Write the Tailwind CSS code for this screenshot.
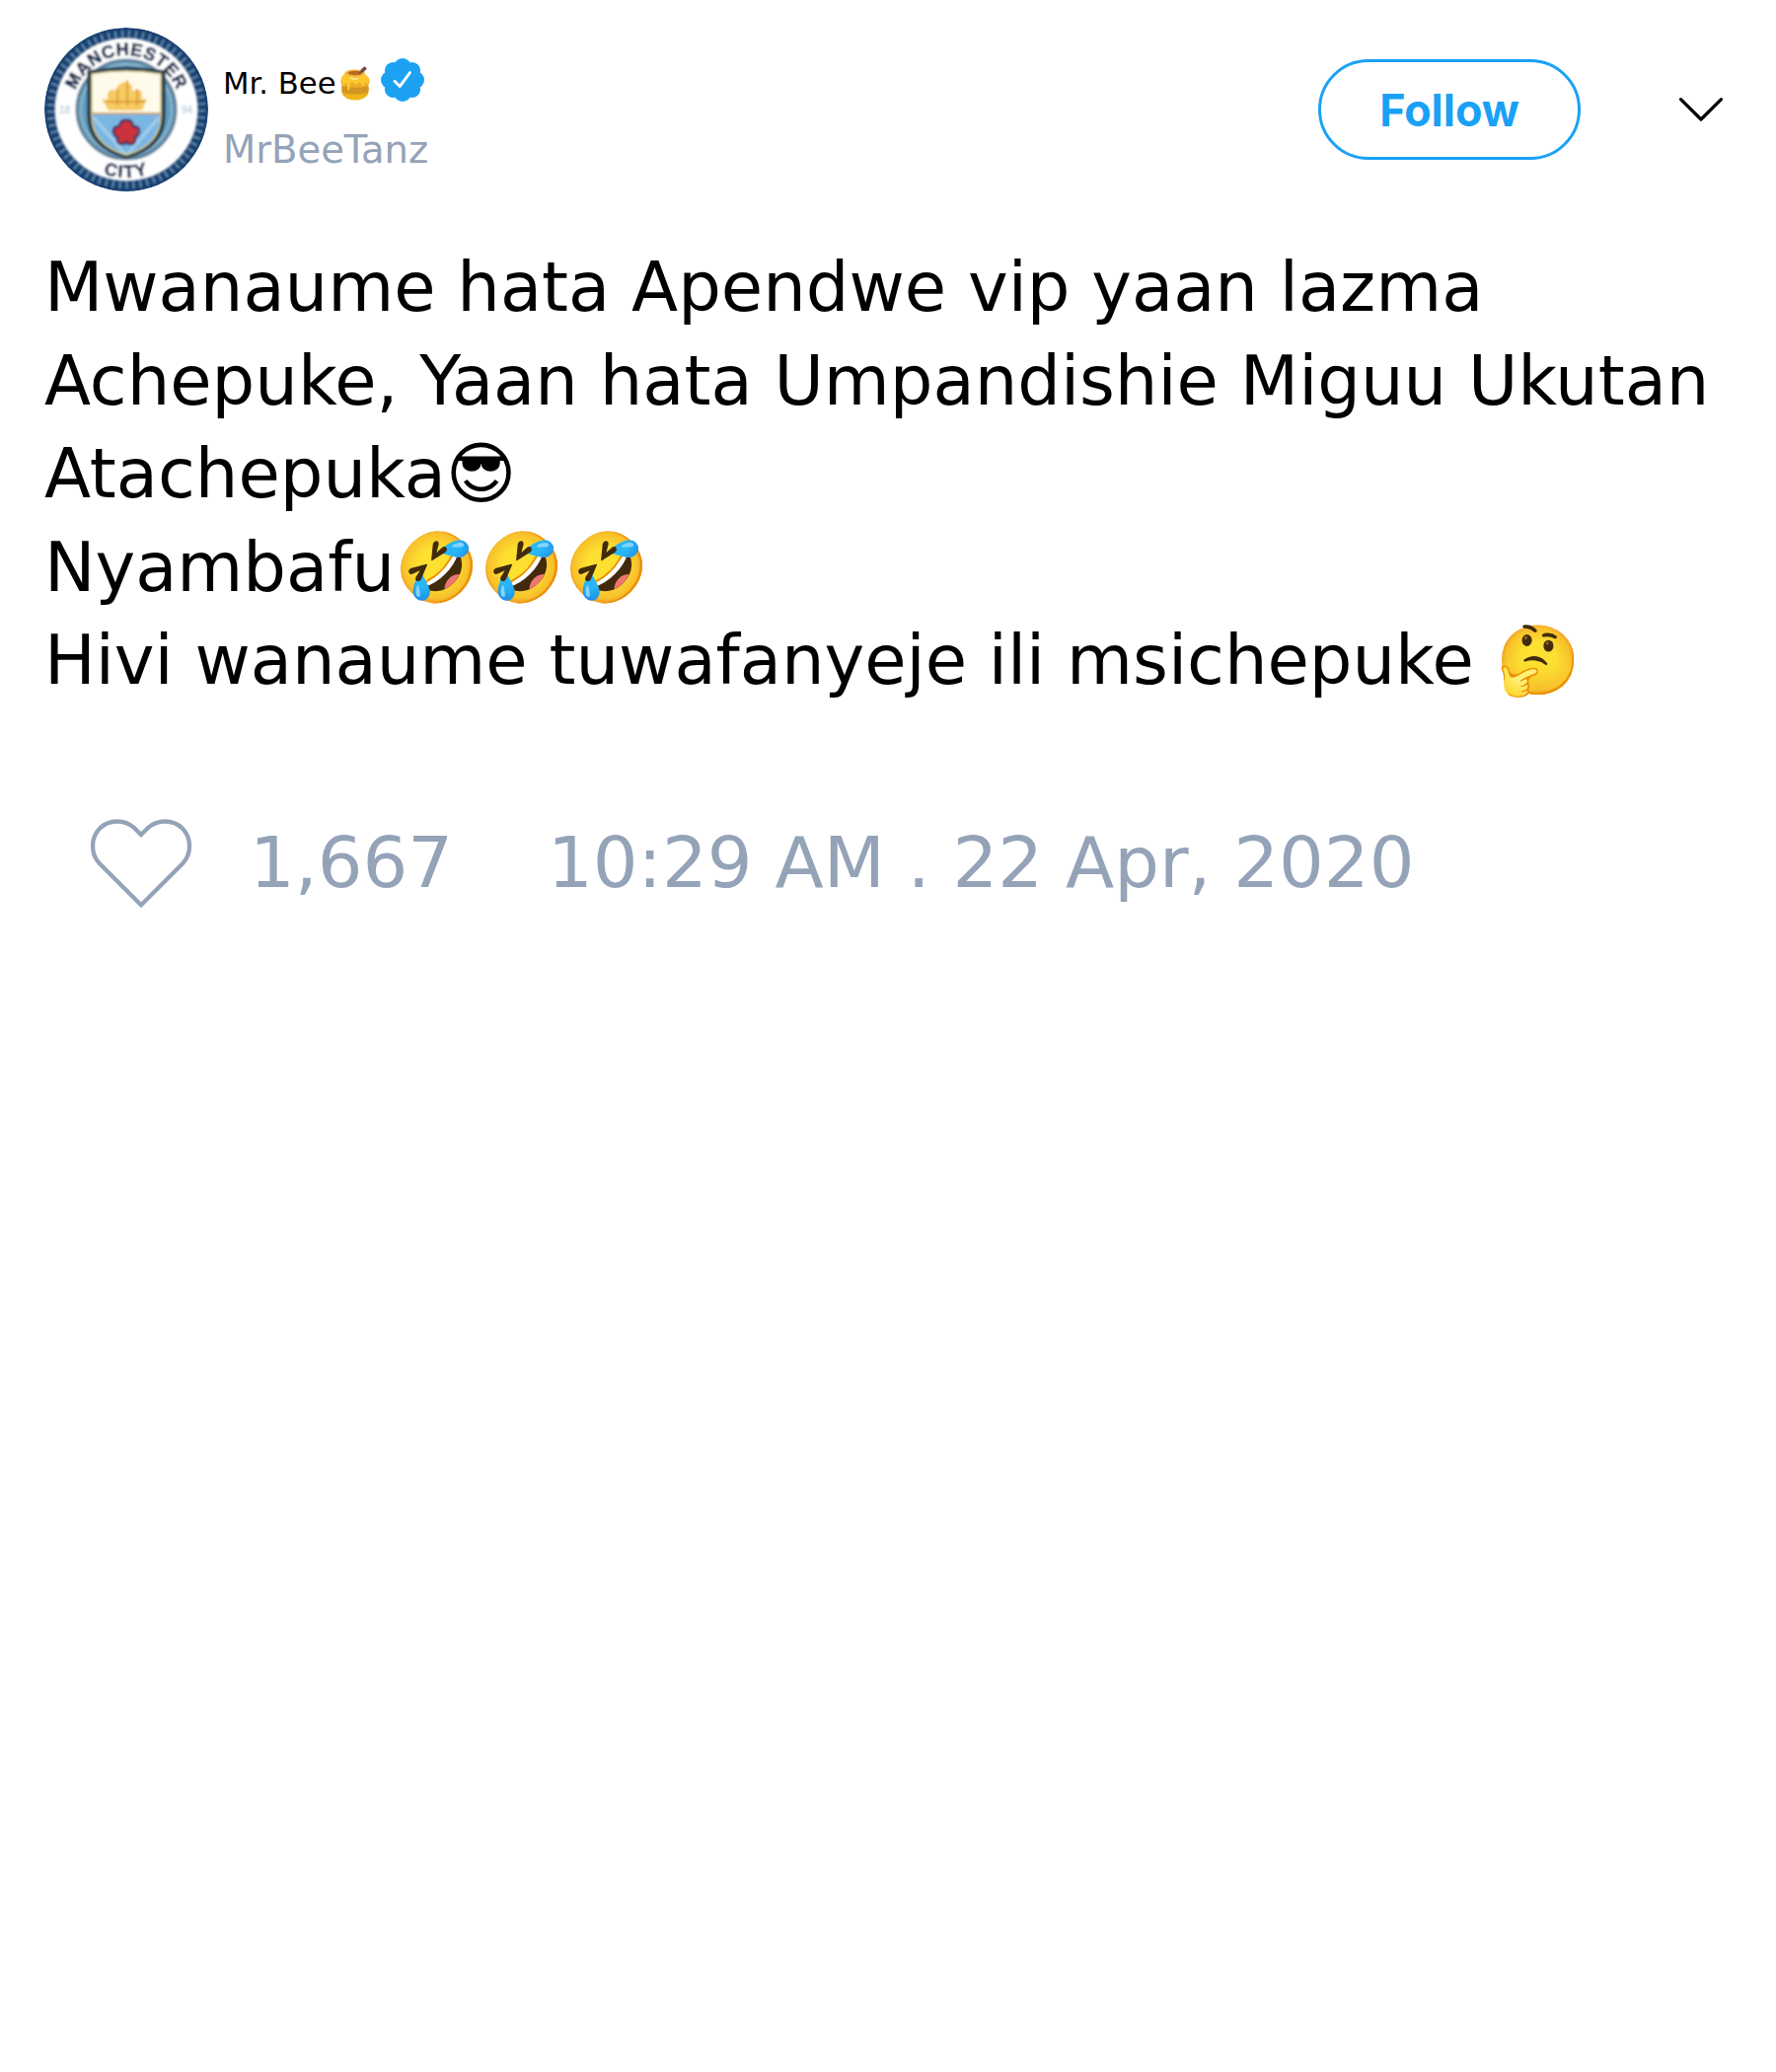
<!DOCTYPE html>
<html lang="sw">
<head>
<meta charset="utf-8">
<title>Mr. Bee</title>
<script src="https://cdn.jsdelivr.net/npm/@tailwindcss/browser@4"></script>
</head>
<body class="bg-white text-black font-['DejaVu_Sans',sans-serif]">
<main class="w-[1800px] h-[2100px] overflow-hidden pl-[45px] pt-[28px]">
  <header class="flex items-start h-[166px]">
    <svg class="size-[166px] shrink-0 rounded-full" viewBox="0 0 166 166">
      <defs>
        <filter id="soft"><feGaussianBlur stdDeviation="1.100"/></filter>
        <path id="arcTop" d="M28 83a55 55 0 0 1 110 0"/>
        <path id="arcBottom" d="M14 83a69 69 0 0 0 138 0"/>
        <clipPath id="shield"><path d="M48 47q35-6 70 0v42q0 30-35 40q-35-10-35-40z"/></clipPath>
      </defs>
      <circle cx="83" cy="83" r="83" fill="#173f70"/>
      <g filter="url(#soft)">
        <circle cx="83" cy="83" r="77" fill="none" stroke="#6489a5" stroke-width="7" stroke-dasharray="2.500 4.500"/>
        <circle cx="83" cy="83" r="72.500" fill="#fff"/>
        <circle cx="83" cy="83" r="50" fill="#5f9cc0" stroke="#5f8098" stroke-width="3"/>
        <circle cx="83" cy="83" r="46" fill="none" stroke="#8fb4c8" stroke-width="2"/>
        <path d="M44 44q39-7 78 0v45q0 33-39 43q-39-10-39-43z" fill="#283b4b" stroke="#283b4b" stroke-width="1.500"/>
        <g clip-path="url(#shield)">
          <path fill="#fffbea" d="M44 40h78v47H44z"/>
          <path fill="#79b6e4" d="M44 87h78v46H44z"/>
          <path stroke="#a5cdea" stroke-width="3" d="M50 91l34 40M116 91l-34 40"/>
          <path stroke="#cda25a" stroke-width="2" d="M44 87h78"/>
        </g>
        <path d="M48 47q35-6 70 0v42q0 30-35 40q-35-10-35-40z" fill="none" stroke="#d8c98d" stroke-width="1.500"/>
        <path d="M58 72l6 1v-7q5-6 10-1v-6q8-8 15 0v6q6-5 10 1v7l5-1-5 12H65z" fill="#f6cb62"/>
        <path d="M62 75h40M74 61v18M84 53v26M94 62v17" stroke="#dc9a34" stroke-width="1.800"/>
        <path d="M83 94q6-1 7 6q7 0 6 6q-1 4-4 5q1 7-5 7q-3 0-4-2q-1 2-4 2q-6 0-5-7q-3-1-4-5q-1-6 6-6q1-7 7-6z" fill="#cc303c" stroke="#4b315c" stroke-width="2.500"/>
        <g fill="#16294e" stroke="#16294e" stroke-width="0.600" font-family="Liberation Sans, sans-serif" font-weight="700" font-size="18">
          <text><textPath href="#arcTop" startOffset="50%" text-anchor="middle" letter-spacing="0.600">MANCHESTER</textPath></text>
          <text><textPath href="#arcBottom" startOffset="50%" text-anchor="middle" letter-spacing="1.500">CITY</textPath></text>
        </g>
        <g fill="#a3b9cc" font-family="Liberation Sans, sans-serif" font-size="10">
          <text x="15" y="87">18</text><text x="139" y="87">94</text>
        </g>
      </g>
    </svg>
    <div class="ml-[15px] flex flex-col">
      <div class="flex items-start pt-[31px] h-[89px]">
        <span class="pt-px text-[30.7px] leading-[50px] whitespace-nowrap">Mr. Bee</span>
        <svg role="img" aria-label="🍯" class="w-[32px] h-[36px] ml-[3px] mt-[8px]" viewBox="0 0 32 36">
          <defs><linearGradient id="pot" x2="0" y2="1"><stop stop-color="#f7bd31"/><stop offset=".6" stop-color="#e9a522"/><stop offset="1" stop-color="#f2bd14"/></linearGradient></defs>
          <path d="M6 8Q1 11 1.500 16Q3 20 2.500 23Q1 29 8 33Q16 36 24 33Q31 29 29.500 23Q28.500 20 30.500 16Q31 11 25 8z" fill="url(#pot)"/>
          <path d="M2.500 20Q16 24 29.500 20Q30 26 28 27Q16 30 4 27Q2 26 2.500 20z" fill="#d39624"/>
          <ellipse cx="15.500" cy="7.500" rx="10.500" ry="4" fill="#f0b746"/>
          <ellipse cx="16" cy="7" rx="7.500" ry="2.200" fill="#b96a1c"/>
          <path d="M2 14Q2 9 6 8Q7 11 12 10Q17 14 25 8Q31 11 30 16Q28 20 27 16Q25 16 25 20Q23 22 22 17Q19 16 18 18Q16 20 15 17Q13 15 11 17L10 24Q8 26 8 22Q8 16 6 17Q5 22 3.500 19z" fill="#fdc82d"/>
          <path d="M11 11.500q4 3 8 .5" stroke="#ffdf80" stroke-width="2" fill="none"/>
          <path d="M20 7l4-3" stroke="#84503b" stroke-width="1.800"/><path d="M23.500 4.500l2-2" stroke="#75483d" stroke-width="3.800" stroke-linecap="round"/>
        </svg>
        <svg class="size-[44px] ml-[10px]" viewBox="386 59 44 44">
          <g fill="#1da1f2">
            <circle cx="408" cy="81" r="17"/>
            <circle cx="408" cy="68" r="9"/><circle cx="408" cy="94" r="9"/><circle cx="395" cy="81" r="9"/><circle cx="421" cy="81" r="9"/>
            <circle cx="398.500" cy="71.500" r="8.600"/><circle cx="417.500" cy="71.500" r="8.600"/><circle cx="398.500" cy="90.500" r="8.600"/><circle cx="417.500" cy="90.500" r="8.600"/>
          </g>
          <path d="M400 82.300l5.200 5.300 10.300-14" fill="none" stroke="#fff" stroke-width="2.800" stroke-linecap="round" stroke-linejoin="round"/>
        </svg>
      </div>
      <span class="text-[38.5px] leading-[70px] text-[#94a3b8] whitespace-nowrap">MrBeeTanz</span>
    </div>
    <button class="ml-auto mt-[32px] pt-[2px] w-[266px] h-[102px] shrink-0 rounded-[51px] border-[3px] border-[#1aa1f5] text-[#1aa1f5] text-[44.8px] leading-[60px] font-bold font-['Inter',sans-serif]">Follow</button>
    <svg class="w-[50px] h-[30px] ml-[97px] mr-[51px] mt-[68px] shrink-0" viewBox="1699 96 50 30"><path d="M1703.500 100.700L1724 121l20.500-20.300" fill="none" stroke="#000" stroke-width="3.200" stroke-linecap="round" stroke-linejoin="round"/></svg>
  </header>

  <p class="mt-[50px] text-[68.8px] leading-[94.5px] whitespace-nowrap">Mwanaume hata Apendwe vip yaan lazma<br>Achepuke, Yaan hata Umpandishie Miguu Ukutan<br>Atachepuka😎<br>Nyambafu🤣🤣🤣<br>Hivi wanaume tuwafanyeje ili msichepuke 🤔</p>

  <footer class="mt-[109px] flex items-start text-[72px] leading-[96px] text-[#94a3b8] whitespace-nowrap">
    <svg class="w-[106px] h-[98px] ml-[45px]" viewBox="90 826 106 98"><path d="M143 917.300L100.700 875C96 870 94 863 94 857.500C94 843 105 832.500 118.700 832.500C126 832.500 132 835.500 136 839L143 846L150 839C154 835.500 160 832.500 167.300 832.500C181 832.500 192 843 192 857.500C192 863 190 870 185.300 875Z" fill="none" stroke="currentColor" stroke-width="4.300"/></svg>
    <span class="ml-[57px] w-[302px]">1,667</span>
    <span>10:29 AM . 22 Apr, 2020</span>
  </footer>
</main>
</body>
</html>
